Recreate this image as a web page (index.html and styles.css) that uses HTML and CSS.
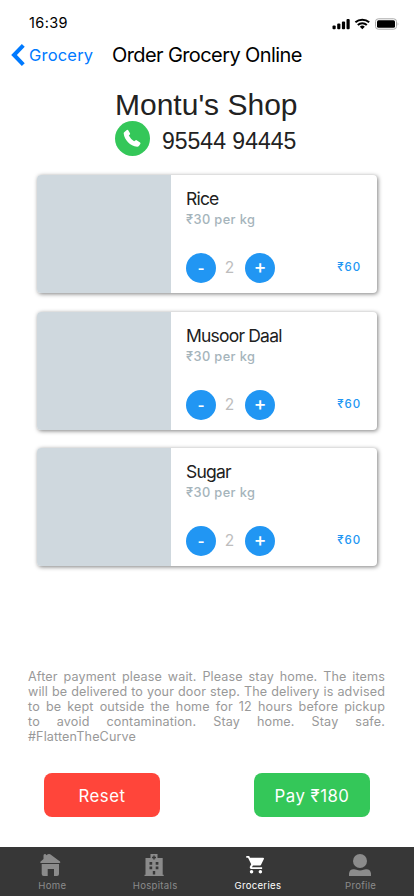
FILE: index.html
```html
<!DOCTYPE html>
<html lang="en">
<head>
<meta charset="utf-8">
<title>Order Grocery Online</title>
<link rel="stylesheet" href="styles.css">
</head>
<body>
<div class="screen">
  <div class="status">
    <span class="time">16:39</span>
    <svg class="signals" width="68" height="14" viewBox="0 0 68 14">
      <rect x="0.500" y="8.600" width="3.200" height="3.600" rx="1"/>
      <rect x="5.200" y="6.600" width="3.200" height="5.600" rx="1"/>
      <rect x="9.900" y="4.400" width="3.200" height="7.800" rx="1"/>
      <rect x="14.500" y="2" width="3.200" height="10.200" rx="1"/>
      <g fill="none" stroke="#000" stroke-width="2">
        <path d="M23.400 5.300a10.300 10.300 0 0 1 13.800 0"/>
        <path d="M25.800 8a6.600 6.600 0 0 1 9 0"/>
      </g>
      <path d="M27.800 9.700a3.700 3.700 0 0 1 5 0L30.300 12.200z"/>
      <rect x="43.500" y="1.800" width="21" height="10.400" rx="2.800" fill="none" stroke="#aaa"/>
      <rect x="45" y="3.300" width="18" height="7.400" rx="1.500"/>
      <path d="M65.700 5.300q1.500 1.700 0 3.400z" fill="#aaa"/>
    </svg>
  </div>
  <header class="nav">
    <svg class="chevron" width="14" height="22" viewBox="0 0 14 22"><path d="M12.300 1.400 3 11l9.300 9.600" fill="none" stroke="#007aff" stroke-width="4"/></svg>
    <span class="back">Grocery</span>
    <span class="title">Order Grocery Online</span>
  </header>
  <main>
    <h1 class="shop">Montu's Shop</h1>
    <div class="phone">
      <svg width="35" height="35" viewBox="0 0 35 35"><circle cx="17.500" cy="17.500" r="17.500" fill="#34c759"/><path d="M9.200 11.200 11.800 9q.8-.6 1.400.2l1.800 3q.4.8-.2 1.400l-1 .9q1.600 3.300 5.300 5.700l1.500-.9q.8-.4 1.400.1l3.100 2.200q.8.700.2 1.500l-1.400 1.900q-.7.800-1.800.7C15 24.900 9.500 19 8.700 12.500q-.1-.8.500-1.300z" fill="#fff"/></svg>
      <span>95544 94445</span>
    </div>
    <section class="cards">
      <article class="card">
        <div class="photo"></div>
        <div class="info">
          <h2 class="name">Rice</h2>
          <p class="rate">₹30 per kg</p>
          <div class="row"><button class="step minus">-</button><span class="qty">2</span><button class="step plus">+</button><span class="sum">₹60</span></div>
        </div>
      </article>
      <article class="card">
        <div class="photo"></div>
        <div class="info">
          <h2 class="name">Musoor Daal</h2>
          <p class="rate">₹30 per kg</p>
          <div class="row"><button class="step minus">-</button><span class="qty">2</span><button class="step plus">+</button><span class="sum">₹60</span></div>
        </div>
      </article>
      <article class="card">
        <div class="photo"></div>
        <div class="info">
          <h2 class="name">Sugar</h2>
          <p class="rate">₹30 per kg</p>
          <div class="row"><button class="step minus">-</button><span class="qty">2</span><button class="step plus">+</button><span class="sum">₹60</span></div>
        </div>
      </article>
    </section>
    <p class="note">After payment please wait. Please stay home. The items<br>will be delivered to your door step. The delivery is advised<br>to be kept outside the home for 12 hours before pickup<br>to avoid contamination. Stay home. Stay safe.<br><span class="tag">#FlattenTheCurve</span></p>
    <div class="actions"><button class="reset">Reset</button><button class="pay">Pay ₹180</button></div>
  </main>
  <nav class="tabs">
    <a class="tab"><svg width="24" height="24" viewBox="0 0 24 24"><path d="M4.500 2.500q0-1.500 1.300-1.500T7.300 2.200L8.800 1.300q1.200-.7 2.400 0L21 8.500q1 1.300-.5 1.500H2q-1.500-.2-.6-1.300L4.500 6zM2.700 11H20v10q0 2-2 2h-3v-7H8.700v7H4.700q-2 0-2-2z"/></svg><span>Home</span></a>
    <a class="tab"><svg width="24" height="24" viewBox="0 0 24 24"><path fill-rule="evenodd" d="M8.500 1h7v4h5.200v16.800h1V23H2.500v-1.200h1V5h5zM11.300 2.500v1.200H10v1.500h1.300v1.300h1.400V5.200H14V3.700h-1.300V2.500zM7.500 9v2.700h2.700V9zm6.200 0v2.700h2.700V9zM7.500 13.500v2.700h2.700v-2.700zm6.200 0v2.700h2.700v-2.700zM10.800 18v3.500h2.400V18z"/></svg><span>Hospitals</span></a>
    <a class="tab on"><svg width="24" height="24" viewBox="0 0 24 24"><g transform="translate(.4 1.600) scale(.88)"><path d="M7 17.500a2 2 0 1 0 0 4 2 2 0 0 0 0-4zM1 1.500v2h2l3.600 7.600-1.400 2.400c-.7 1.300.3 3 1.800 3h12v-2H7.400l1.200-2h7.400c.8 0 1.400-.4 1.800-1L21 5c.4-.7-.1-1.500-.9-1.500H5.200l-.9-2zM17 17.500a2 2 0 1 0 0 4 2 2 0 0 0 0-4z"/></g></svg><span>Groceries</span></a>
    <a class="tab"><svg width="24" height="24" viewBox="0 0 24 24"><circle cx="12" cy="8" r="7"/><path d="M1 23v-2.500Q1.500 16 6 16.200q1.500 0 2.500.6 3.500 1.300 7 0 1-.6 2.500-.6 4.500-.2 5 4.300V23z"/></svg><span>Profile</span></a>
  </nav>
</div>
</body>
</html>
```

FILE: styles.css
```css
* { box-sizing: border-box; }
body { margin: 0; background: #fff; font-family: Inter, "Liberation Sans", sans-serif; }
h1, h2, p { margin: 0; font-weight: 400; }
button { border: 0; padding: 0; font: inherit; color: #fff; }
.screen { width: 414px; height: 896px; display: flex; flex-direction: column; overflow: hidden; white-space: nowrap; }
.status { height: 36px; display: flex; justify-content: space-between; padding: 13px 14px 0 29px; }
.time { font-size: 14.500px; line-height: 20px; letter-spacing: .4px; }
.signals { margin-top: 4px; }
.nav { height: 50px; display: flex; align-items: flex-start; padding: 8px 0 0 11px; }
.chevron { flex: none; }
.back { color: #007aff; font-size: 16.500px; line-height: 22px; letter-spacing: .2px; width: 83px; padding-left: 4px; }
.title { font-size: 20px; line-height: 22px; letter-spacing: -.6px; margin-left: 4px; }
main { flex: 1; }
.shop { font: 30px/36px "Liberation Sans", sans-serif; color: #222; margin-left: 115px; padding-top: 1px; height: 36px; }
.phone { height: 35px; margin: -1px 0 0 115px; display: flex; gap: 12px; font: 23px/41px "Liberation Sans", sans-serif; color: #222; }
.phone svg { flex: none; }
.cards { padding: 19px 37px 0; display: flex; flex-direction: column; gap: 18.500px; }
.card { height: 118px; display: flex; border-radius: 4px; background: #fff; box-shadow: 1px 1px 4px rgba(0,0,0,.5); overflow: hidden; }
.photo { width: 134px; background: #cfd8de; }
.info { flex: 1; padding: 12px 16px 0 15px; }
.name { font-size: 17.500px; line-height: 24px; letter-spacing: -.8px; color: #212121; }
.rate { font-size: 12.800px; line-height: 17px; font-weight: 500; letter-spacing: .4px; color: #a5b4bb; }
.row { display: flex; align-items: center; margin-top: 25px; }
.step { width: 30px; height: 30px; border-radius: 50%; background: #2196f3; font-size: 20px; line-height: 28px; }
.minus { font-family: "Liberation Sans", sans-serif; font-size: 20px; line-height: 28px; }
.plus { padding-bottom: 2px; font-weight: 500; font-size: 19px; }
.qty { width: 29px; padding: 0 2px 1px 0; text-align: center; font-size: 15.500px; color: #bdbdbd; }
.sum { margin-left: auto; padding-bottom: 2px; color: #2196f3; font-size: 11.500px; font-weight: 500; letter-spacing: .9px; }
.note { margin: 103px 29px 0 28px; font-size: 12.600px; line-height: 15px; letter-spacing: .13px; color: #999; text-align: justify; text-align-last: justify; white-space: normal; }
.tag { display: block; text-align-last: left; }
.actions { display: flex; justify-content: space-between; margin: 29px 44px 0; }
.actions button { width: 116px; height: 44px; padding-top: 1px; border-radius: 8px; font-size: 16.800px; letter-spacing: .5px; }
.reset { background: #ff453a; }
.pay { background: #34c759; }
.tabs { height: 49px; background: #373737; display: flex; flex: none; padding-right: 3px; }
.tab { flex: 1; display: flex; flex-direction: column; align-items: center; color: #8b8b8b; fill: currentColor; font-size: 9.600px; line-height: 12px; letter-spacing: .3px; padding-top: 6px; }
.tab span { margin-top: 3px; padding-left: 2px; }
.on { color: #fff; }
```
